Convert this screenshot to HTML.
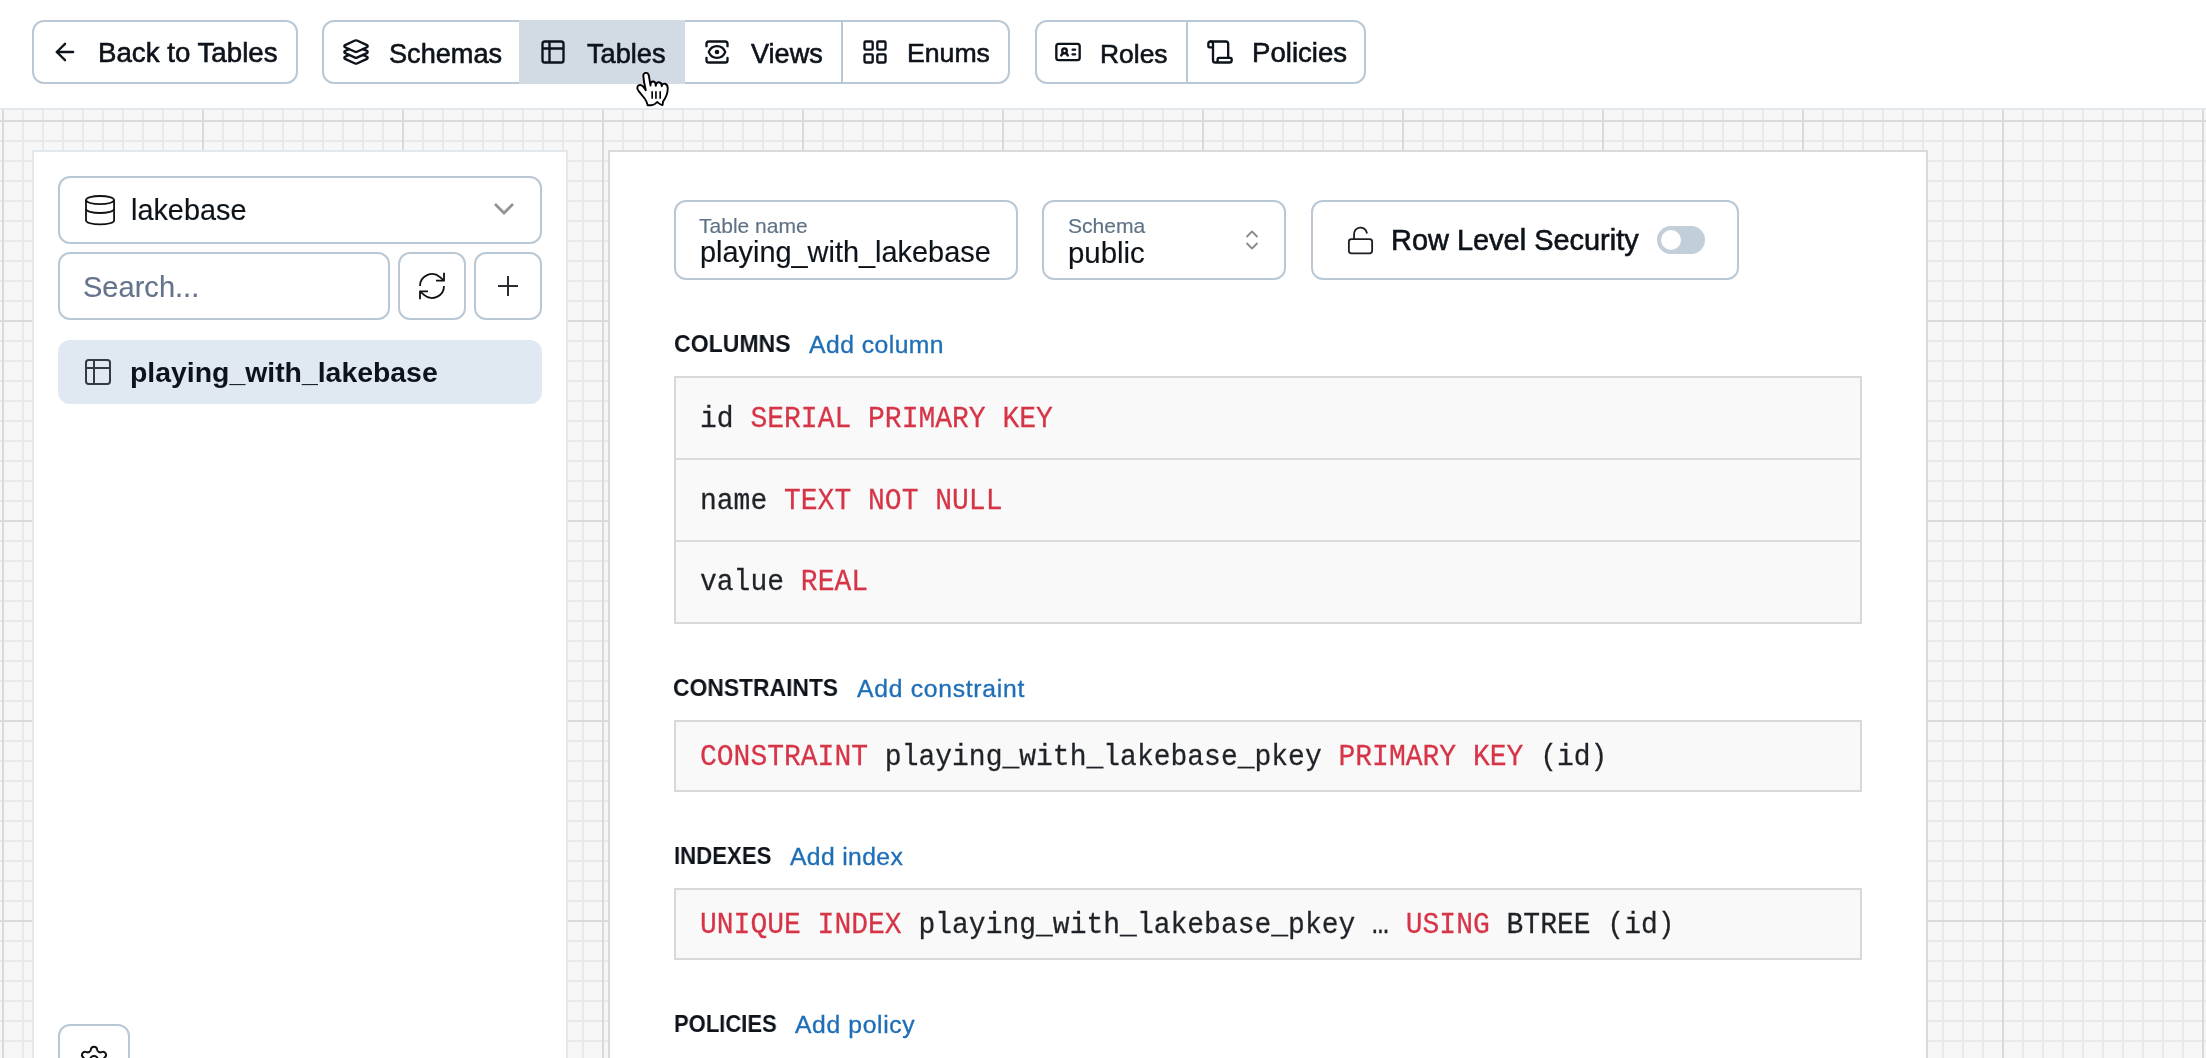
<!DOCTYPE html>
<html><head><meta charset="utf-8"><title>Tables</title>
<style>
html,body{margin:0;padding:0;}
body{width:2206px;height:1058px;overflow:hidden;position:relative;background:#fff;font-family:"Liberation Sans", sans-serif;}
.grid{position:absolute;left:0;top:110px;width:2206px;height:948px;background-color:#f7f7f7;
background-image:linear-gradient(to right,#dadada 2px,transparent 2px),linear-gradient(to bottom,#dadada 2px,transparent 2px),linear-gradient(to right,#e9e9e9 2px,transparent 2px),linear-gradient(to bottom,#e9e9e9 2px,transparent 2px);
background-size:200px 200px,200px 200px,20px 20px,20px 20px;
background-position:2px 10px,2px 10px,2px 10px,2px 10px;}
.t{position:absolute;white-space:nowrap;will-change:transform;}
</style></head><body>
<div class="grid"></div>
<div style="position:absolute;left:0px;top:108px;width:2206px;height:2px;background:#e3e8ee"></div>
<div style="position:absolute;left:32px;top:20px;width:266px;height:64px;box-sizing:border-box;border:2px solid #bac8d5;border-radius:12px;background:#fff"></div>
<svg style="position:absolute;left:51.3px;top:38px;" width="28" height="28" viewBox="0 0 24 24" fill="none" stroke="#0d131a" stroke-width="2.0" stroke-linecap="round" stroke-linejoin="round"><path d="m12 19-7-7 7-7"/><path d="M19 12H5"/></svg>
<div class="t" style="left:98.20px;top:39.10px;font-size:27.7px;line-height:28px;color:#0d131a;font-weight:400;font-family:'Liberation Sans', sans-serif;-webkit-text-stroke-width:0.6px;">Back to Tables</div>
<div style="position:absolute;left:322px;top:20px;width:688px;height:64px;box-sizing:border-box;border:2px solid #bac8d5;border-radius:12px;background:#fff"></div>
<div style="position:absolute;left:519px;top:20px;width:166px;height:64px;background:#d2dae3"></div>
<div style="position:absolute;left:841px;top:20px;width:2px;height:64px;background:#bac8d5"></div>
<svg style="position:absolute;left:342px;top:38px;" width="28" height="28" viewBox="0 0 24 24" fill="none" stroke="#0d131a" stroke-width="2.0" stroke-linecap="round" stroke-linejoin="round"><path d="m12.83 2.18a2 2 0 0 0-1.66 0L2.6 6.08a1 1 0 0 0 0 1.83l8.58 3.91a2 2 0 0 0 1.66 0l8.58-3.9a1 1 0 0 0 0-1.83Z"/><path d="m6.08 9.5-3.5 1.6a1 1 0 0 0 0 1.81l8.6 3.91a2 2 0 0 0 1.65 0l8.58-3.9a1 1 0 0 0 0-1.83l-3.5-1.59"/><path d="m6.08 14.5-3.5 1.6a1 1 0 0 0 0 1.81l8.6 3.91a2 2 0 0 0 1.65 0l8.58-3.9a1 1 0 0 0 0-1.83l-3.5-1.59"/></svg>
<div class="t" style="left:388.60px;top:39.79px;font-size:27.15px;line-height:27px;color:#0d131a;font-weight:400;font-family:'Liberation Sans', sans-serif;-webkit-text-stroke-width:0.6px;">Schemas</div>
<svg style="position:absolute;left:539px;top:38px;" width="28" height="28" viewBox="0 0 24 24" fill="none" stroke="#0d131a" stroke-width="2.0" stroke-linecap="round" stroke-linejoin="round"><path d="M9 3H5a2 2 0 0 0-2 2v4m6-6h10a2 2 0 0 1 2 2v4M9 3v18m0 0h10a2 2 0 0 0 2-2V9M9 21H5a2 2 0 0 1-2-2V9m0 0h18"/></svg>
<div class="t" style="left:586.90px;top:39.78px;font-size:27.2px;line-height:27px;color:#0d131a;font-weight:400;font-family:'Liberation Sans', sans-serif;-webkit-text-stroke-width:0.6px;">Tables</div>
<svg style="position:absolute;left:702.9px;top:38px;" width="28" height="28" viewBox="0 0 24 24" fill="none" stroke="#0d131a" stroke-width="2.0" stroke-linecap="round" stroke-linejoin="round"><path d="M21 17v2a2 2 0 0 1-2 2H5a2 2 0 0 1-2-2v-2"/><path d="M21 7V5a2 2 0 0 0-2-2H5a2 2 0 0 0-2 2v2"/><circle cx="12" cy="12" r="1"/><path d="M18.944 12.33a1 1 0 0 0 0-.66 7.5 7.5 0 0 0-13.888 0 1 1 0 0 0 0 .66 7.5 7.5 0 0 0 13.888 0"/></svg>
<div class="t" style="left:751.30px;top:39.81px;font-size:27.1px;line-height:27px;color:#0d131a;font-weight:400;font-family:'Liberation Sans', sans-serif;-webkit-text-stroke-width:0.6px;">Views</div>
<svg style="position:absolute;left:860.9px;top:38px;" width="28" height="28" viewBox="0 0 24 24" fill="none" stroke="#0d131a" stroke-width="2.0" stroke-linecap="round" stroke-linejoin="round"><rect width="7" height="7" x="3" y="3" rx="1"/><rect width="7" height="7" x="14" y="3" rx="1"/><rect width="7" height="7" x="14" y="14" rx="1"/><rect width="7" height="7" x="3" y="14" rx="1"/></svg>
<div class="t" style="left:907.10px;top:39.97px;font-size:26.65px;line-height:27px;color:#0d131a;font-weight:400;font-family:'Liberation Sans', sans-serif;-webkit-text-stroke-width:0.6px;">Enums</div>
<div style="position:absolute;left:1034.5px;top:20px;width:331.5px;height:64px;box-sizing:border-box;border:2px solid #bac8d5;border-radius:12px;background:#fff"></div>
<div style="position:absolute;left:1186px;top:20px;width:2px;height:64px;background:#bac8d5"></div>
<svg style="position:absolute;left:1054px;top:38px;" width="28" height="28" viewBox="0 0 24 24" fill="none" stroke="#0d131a" stroke-width="2.0" stroke-linecap="round" stroke-linejoin="round"><path d="M16 10h2"/><path d="M16 14h2"/><path d="M6.17 15a3 3 0 0 1 5.66 0"/><circle cx="9" cy="11" r="2"/><rect x="2" y="5" width="20" height="14" rx="2"/></svg>
<div class="t" style="left:1100.20px;top:40.54px;font-size:26.45px;line-height:26px;color:#0d131a;font-weight:400;font-family:'Liberation Sans', sans-serif;-webkit-text-stroke-width:0.6px;">Roles</div>
<svg style="position:absolute;left:1206.1px;top:38px;" width="28" height="28" viewBox="0 0 24 24" fill="none" stroke="#0d131a" stroke-width="2.0" stroke-linecap="round" stroke-linejoin="round"><path d="M19 17V5a2 2 0 0 0-2-2H4"/><path d="M8 21h12a2 2 0 0 0 2-2v-1a1 1 0 0 0-1-1H11a1 1 0 0 0-1 1v1a2 2 0 1 1-4 0V5a2 2 0 1 0-4 0v2a1 1 0 0 0 1 1h3"/></svg>
<div class="t" style="left:1252.00px;top:39.14px;font-size:27.6px;line-height:28px;color:#0d131a;font-weight:400;font-family:'Liberation Sans', sans-serif;-webkit-text-stroke-width:0.6px;">Policies</div>
<div style="position:absolute;left:32px;top:150px;width:536px;height:1000px;box-sizing:border-box;border:2px solid #e3e8ee;background:#fff"></div>
<div style="position:absolute;left:58px;top:176px;width:484px;height:68px;box-sizing:border-box;border:2px solid #bac8d5;border-radius:12px;background:#fff"></div>
<svg style="position:absolute;left:84px;top:194px;" width="32" height="32" viewBox="0 0 32 32"><g fill="none" stroke="#111" stroke-width="1.8"><ellipse cx="16.05" cy="6.1" rx="14.05" ry="4.1"/><path d="M2 6.05V26.5A14.05 3.9 0 0 0 30.1 26.5V6.05"/><path d="M2 15.1A14.05 3.9 0 0 0 30.1 15.1"/></g></svg>
<div class="t" style="left:131.00px;top:195.70px;font-size:28.85px;line-height:29px;color:#0d131a;font-weight:400;font-family:'Liberation Sans', sans-serif;-webkit-text-stroke-width:0.15px;">lakebase</div>
<svg style="position:absolute;left:490px;top:198px;" width="28" height="22" viewBox="0 0 28 22"><path d="M5 6L14 15L23 6" fill="none" stroke="#939393" stroke-width="2.8" stroke-linejoin="miter"/></svg>
<div style="position:absolute;left:58px;top:252px;width:332px;height:68px;box-sizing:border-box;border:2px solid #bac8d5;border-radius:12px;background:#fff"></div>
<div class="t" style="left:83.40px;top:272.63px;font-size:29.06px;line-height:29px;color:#64748b;font-weight:400;font-family:'Liberation Sans', sans-serif;-webkit-text-stroke-width:0.15px;">Search...</div>
<div style="position:absolute;left:398px;top:252px;width:68px;height:68px;box-sizing:border-box;border:2px solid #bac8d5;border-radius:12px;background:#fff"></div>
<svg style="position:absolute;left:416px;top:270px;" width="32" height="32" viewBox="0 0 24 24" fill="none" stroke="#111" stroke-width="1.35" stroke-linecap="butt" stroke-linejoin="round"><path d="M21 2v6h-6"/><path d="M3 12a9 9 0 0 1 15-6.7L21 8"/><path d="M3 22v-6h6"/><path d="M21 12a9 9 0 0 1-15 6.7L3 16"/></svg>
<div style="position:absolute;left:474px;top:252px;width:68px;height:68px;box-sizing:border-box;border:2px solid #bac8d5;border-radius:12px;background:#fff"></div>
<svg style="position:absolute;left:492px;top:270px;" width="32" height="32" viewBox="0 0 32 32"><path d="M6 16H26M16 6V26" fill="none" stroke="#2a2e33" stroke-width="2"/></svg>
<div style="position:absolute;left:58px;top:340px;width:484px;height:64px;border-radius:12px;background:#e0e8f2"></div>
<svg style="position:absolute;left:82px;top:356px;" width="32" height="32" viewBox="0 0 24 24" fill="none" stroke="#333a42" stroke-width="1.5" stroke-linecap="round" stroke-linejoin="round"><path d="M9 3H5a2 2 0 0 0-2 2v4m6-6h10a2 2 0 0 1 2 2v4M9 3v18m0 0h10a2 2 0 0 0 2-2V9M9 21H5a2 2 0 0 1-2-2V9m0 0h18"/></svg>
<div class="t" style="left:130.10px;top:358.16px;font-size:28.4px;line-height:28px;color:#0d131a;font-weight:700;font-family:'Liberation Sans', sans-serif;-webkit-text-stroke-width:0px;">playing_with_lakebase</div>
<div style="position:absolute;left:58px;top:1024px;width:72px;height:72px;box-sizing:border-box;border:2px solid #bac8d5;border-radius:12px;background:#fff"></div>
<svg style="position:absolute;left:78px;top:1044px;" width="32" height="32" viewBox="0 0 24 24" fill="none" stroke="#111" stroke-width="1.5" stroke-linecap="round" stroke-linejoin="round"><path d="M9.671 4.136a2.34 2.34 0 0 1 4.659 0 2.34 2.34 0 0 0 3.319 1.915 2.34 2.34 0 0 1 2.33 4.033 2.34 2.34 0 0 0 0 3.831 2.34 2.34 0 0 1-2.33 4.033 2.34 2.34 0 0 0-3.319 1.915 2.34 2.34 0 0 1-4.659 0 2.34 2.34 0 0 0-3.32-1.915 2.34 2.34 0 0 1-2.33-4.033 2.34 2.34 0 0 0 0-3.831A2.34 2.34 0 0 1 6.35 6.051a2.34 2.34 0 0 0 3.319-1.915"/><circle cx="12" cy="12" r="3"/></svg>
<div style="position:absolute;left:608px;top:150px;width:1320px;height:1000px;box-sizing:border-box;border:2px solid #dadada;background:#fff"></div>
<div style="position:absolute;left:674px;top:200px;width:344px;height:80px;box-sizing:border-box;border:2px solid #bac8d5;border-radius:12px;background:#fff"></div>
<div class="t" style="left:698.90px;top:214.81px;font-size:21.04px;line-height:21px;color:#5e7285;font-weight:400;font-family:'Liberation Sans', sans-serif;-webkit-text-stroke-width:0.15px;">Table name</div>
<div class="t" style="left:700.30px;top:238.49px;font-size:28.9px;line-height:29px;color:#0d131a;font-weight:400;font-family:'Liberation Sans', sans-serif;-webkit-text-stroke-width:0.15px;">playing_with_lakebase</div>
<div style="position:absolute;left:1042px;top:200px;width:244px;height:80px;box-sizing:border-box;border:2px solid #bac8d5;border-radius:12px;background:#fff"></div>
<div class="t" style="left:1067.60px;top:214.79px;font-size:21.09px;line-height:21px;color:#5e7285;font-weight:400;font-family:'Liberation Sans', sans-serif;-webkit-text-stroke-width:0.15px;">Schema</div>
<div class="t" style="left:1067.70px;top:238.31px;font-size:29.4px;line-height:29px;color:#0d131a;font-weight:400;font-family:'Liberation Sans', sans-serif;-webkit-text-stroke-width:0.15px;">public</div>
<svg style="position:absolute;left:1240px;top:226px;" width="24" height="28" viewBox="0 0 24 28"><path d="M7 10.5L12 5.5L17 10.5M7 17.5L12 22.5L17 17.5" fill="none" stroke="#8a8a8a" stroke-width="1.8" stroke-linecap="round" stroke-linejoin="round"/></svg>
<div style="position:absolute;left:1311px;top:200px;width:428px;height:80px;box-sizing:border-box;border:2px solid #bac8d5;border-radius:12px;background:#fff"></div>
<svg style="position:absolute;left:1344.8px;top:224.6px;" width="31" height="31" viewBox="0 0 24 24" fill="none" stroke="#1a1f25" stroke-width="1.4" stroke-linecap="round" stroke-linejoin="round"><rect width="18" height="11" x="3" y="11" rx="2" ry="2"/><path d="M7 11V7a5 5 0 0 1 9.9-1"/></svg>
<div class="t" style="left:1390.90px;top:225.87px;font-size:28.95px;line-height:29px;color:#0d131a;font-weight:400;font-family:'Liberation Sans', sans-serif;-webkit-text-stroke-width:0.6px;">Row Level Security</div>
<div style="position:absolute;left:1657px;top:226px;width:48px;height:28px;border-radius:14px;background:#c2ceda"></div>
<div style="position:absolute;left:1661px;top:230px;width:20px;height:20px;border-radius:10px;background:#fff"></div>
<div class="t" style="left:673.60px;top:332.11px;font-size:24.5px;line-height:24px;color:#0d131a;font-weight:700;font-family:'Liberation Sans', sans-serif;-webkit-text-stroke-width:0px;transform:scaleX(0.941);transform-origin:-0.0px 0;">COLUMNS</div>
<div class="t" style="left:808.50px;top:331.54px;font-size:24.7px;line-height:25px;color:#1f6fb8;font-weight:400;font-family:'Liberation Sans', sans-serif;-webkit-text-stroke-width:0.35px;letter-spacing:0.47px;">Add column</div>
<div style="position:absolute;left:674px;top:376px;width:1188px;height:248px;box-sizing:border-box;border:2px solid #d9d9d9;background:#f9f9f9"></div>
<div style="position:absolute;left:676px;top:458px;width:1184px;height:2px;background:#dcdcdc"></div>
<div style="position:absolute;left:676px;top:540px;width:1184px;height:2px;background:#dcdcdc"></div>
<div class="t" style="left:700.00px;top:405.75px;font-size:28px;line-height:28px;color:#1f2328;font-weight:400;font-family:'Liberation Mono', monospace;-webkit-text-stroke-width:0.25px;white-space:pre;transform:scaleY(1.08);transform-origin:0 21.45px;">id <span style="color:#d63447">SERIAL PRIMARY KEY</span></div>
<div class="t" style="left:700.00px;top:487.75px;font-size:28px;line-height:28px;color:#1f2328;font-weight:400;font-family:'Liberation Mono', monospace;-webkit-text-stroke-width:0.25px;white-space:pre;transform:scaleY(1.08);transform-origin:0 21.45px;">name <span style="color:#d63447">TEXT NOT NULL</span></div>
<div class="t" style="left:700.00px;top:569.35px;font-size:28px;line-height:28px;color:#1f2328;font-weight:400;font-family:'Liberation Mono', monospace;-webkit-text-stroke-width:0.25px;white-space:pre;transform:scaleY(1.08);transform-origin:0 21.45px;">value <span style="color:#d63447">REAL</span></div>
<div class="t" style="left:673.30px;top:676.41px;font-size:24.5px;line-height:24px;color:#0d131a;font-weight:700;font-family:'Liberation Sans', sans-serif;-webkit-text-stroke-width:0px;transform:scaleX(0.933);transform-origin:-0.0px 0;">CONSTRAINTS</div>
<div class="t" style="left:857.30px;top:675.84px;font-size:24.7px;line-height:25px;color:#1f6fb8;font-weight:400;font-family:'Liberation Sans', sans-serif;-webkit-text-stroke-width:0.35px;letter-spacing:0.73px;">Add constraint</div>
<div style="position:absolute;left:674px;top:720px;width:1188px;height:72px;box-sizing:border-box;border:2px solid #d9d9d9;background:#f9f9f9"></div>
<div class="t" style="left:700.00px;top:743.75px;font-size:28px;line-height:28px;color:#1f2328;font-weight:400;font-family:'Liberation Mono', monospace;-webkit-text-stroke-width:0.25px;white-space:pre;transform:scaleY(1.08);transform-origin:0 21.45px;"><span style="color:#d63447">CONSTRAINT</span> playing_with_lakebase_pkey <span style="color:#d63447">PRIMARY KEY</span> (id)</div>
<div class="t" style="left:673.80px;top:844.21px;font-size:24.5px;line-height:24px;color:#0d131a;font-weight:700;font-family:'Liberation Sans', sans-serif;-webkit-text-stroke-width:0px;transform:scaleX(0.905);transform-origin:-0.0px 0;">INDEXES</div>
<div class="t" style="left:790.20px;top:843.64px;font-size:24.7px;line-height:25px;color:#1f6fb8;font-weight:400;font-family:'Liberation Sans', sans-serif;-webkit-text-stroke-width:0.35px;letter-spacing:0.37px;">Add index</div>
<div style="position:absolute;left:674px;top:888px;width:1188px;height:72px;box-sizing:border-box;border:2px solid #d9d9d9;background:#f9f9f9"></div>
<div class="t" style="left:700.00px;top:911.55px;font-size:28px;line-height:28px;color:#1f2328;font-weight:400;font-family:'Liberation Mono', monospace;-webkit-text-stroke-width:0.25px;white-space:pre;transform:scaleY(1.08);transform-origin:0 21.45px;"><span style="color:#d63447">UNIQUE INDEX</span> playing_with_lakebase_pkey … <span style="color:#d63447">USING</span> BTREE (id)</div>
<div class="t" style="left:673.80px;top:1012.31px;font-size:24.5px;line-height:24px;color:#0d131a;font-weight:700;font-family:'Liberation Sans', sans-serif;-webkit-text-stroke-width:0px;transform:scaleX(0.898);transform-origin:-0.0px 0;">POLICIES</div>
<div class="t" style="left:795.20px;top:1011.74px;font-size:24.7px;line-height:25px;color:#1f6fb8;font-weight:400;font-family:'Liberation Sans', sans-serif;-webkit-text-stroke-width:0.35px;letter-spacing:0.63px;">Add policy</div>
<svg style="position:absolute;left:625px;top:60px;overflow:visible" width="60" height="50" viewBox="0 0 60 50"><g transform="scale(0.047244)"><path d="M440 640C420 560 395 440 388 340C382 270 480 235 505 330L540 540C540 430 645 420 652 545C660 440 775 450 778 555C790 470 905 485 905 600C905 720 865 800 805 880L795 955C745 950 705 905 680 890C650 920 620 955 560 958L480 958C468 900 450 860 420 820L290 660C235 600 260 525 322 528C362 530 400 570 440 640Z" fill="#fff" stroke="#000" stroke-width="40" stroke-linejoin="round"/><path d="M575 660V820M655 660V820M745 660V820" stroke="#000" stroke-width="34"/></g></svg>
</body></html>
